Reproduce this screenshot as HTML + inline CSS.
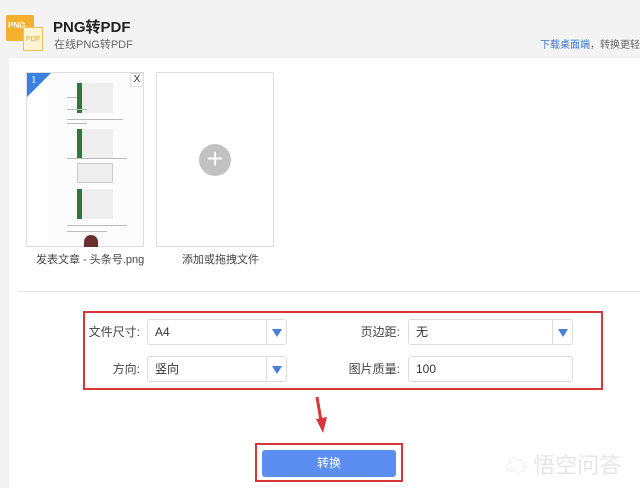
<!DOCTYPE html>
<html><head><meta charset="utf-8"><style>
*{margin:0;padding:0;box-sizing:border-box}
body{width:640px;height:488px;background:#f3f3f3;font-family:"Liberation Sans","Noto Sans CJK SC",sans-serif;position:relative;overflow:hidden;color:#333}
.a{position:absolute}
.main{left:9px;top:58px;width:631px;height:430px;background:#fff}
.card{border:1px solid #ddd;background:#fff;width:118px;height:175px;top:72px}
.sel{border:1px solid #ddd;border-radius:3px;height:26px;font-size:12px;line-height:24px;padding-left:7px;background:#fff}
.sel .ar{position:absolute;right:0;top:0;width:20px;height:24px;border-left:1px solid #ddd}
.sel .ar:after{content:"";position:absolute;left:5px;top:9px;border-left:5px solid transparent;border-right:5px solid transparent;border-top:8px solid #4a7fd8}
.lbl{font-size:12px;color:#444;text-align:right;width:80px}
.ln{position:absolute;height:1px;background:#bbb}
</style></head><body>
<div class="a" style="left:6px;top:15px;width:28px;height:26px;background:#f5b030;border-radius:2px"></div>
<div class="a" style="left:8px;top:21px;font-size:8px;color:#fff;font-weight:bold">PNG</div>
<div class="a" style="left:23px;top:27px;width:20px;height:24px;background:#fff4d6;border:1px solid #f0c060"></div>
<div class="a" style="left:26px;top:36px;font-size:7px;color:#e8a020">PDF</div>
<div class="a" style="left:53px;top:16px;font-size:15px;font-weight:bold;color:#222">PNG转PDF</div>
<div class="a" style="left:54px;top:36px;font-size:11px;color:#666">在线PNG转PDF</div>
<div class="a" style="left:540px;top:36px;font-size:10px;color:#666;white-space:nowrap"><span style="color:#3a78d0">下载桌面端</span>，转换更轻松</div>
<div class="a main"></div>
<div class="a card" style="left:26px">
 <div class="a" style="left:20px;top:0;width:96px;height:173px;background:#fcfcfc"></div>
 <div class="ln" style="left:40px;top:24px;width:14px"></div>
 <div class="a" style="left:50px;top:10px;width:36px;height:30px;background:#eee;border-left:5px solid #2a7a40"></div>
 <div class="ln" style="left:40px;top:36px;width:20px"></div>
 <div class="ln" style="left:40px;top:46px;width:56px"></div>
 <div class="ln" style="left:40px;top:50px;width:20px"></div>
 <div class="a" style="left:50px;top:56px;width:36px;height:30px;background:#eee;border-left:5px solid #2a7a40"></div>
 <div class="ln" style="left:40px;top:85px;width:60px"></div>
 <div class="a" style="left:50px;top:90px;width:36px;height:20px;background:#eee;border:1px solid #ccc"></div>
 <div class="a" style="left:50px;top:116px;width:36px;height:30px;background:#eee;border-left:5px solid #2a7a40"></div>
 <div class="ln" style="left:40px;top:152px;width:60px"></div>
 <div class="ln" style="left:40px;top:158px;width:40px"></div>
 <div class="a" style="left:57px;top:162px;width:14px;height:12px;background:#6a3030;border-radius:7px 7px 0 0"></div>
 <div class="a" style="left:0;top:0;width:0;height:0;border-top:24px solid #3a80e0;border-right:24px solid transparent"></div>
 <div class="a" style="left:4px;top:1px;color:#fff;font-size:11px;font-family:'Liberation Serif',serif">1</div>
 <div class="a" style="left:103px;top:0;width:14px;height:14px;border:1px solid #ddd;background:#fff;font-size:10px;text-align:center;line-height:12px">X</div>
</div>
<div class="a card" style="left:156px"><div class="a" style="left:42px;top:71px;width:32px;height:32px;border-radius:50%;background:#c2c2c2;color:#fff;font-size:28px;line-height:30px;text-align:center">+</div></div>
<div class="a" style="left:36px;top:251px;font-size:11px;color:#444">发表文章 - 头条号.png</div>
<div class="a" style="left:182px;top:251px;font-size:11px;color:#444">添加或拖拽文件</div>
<div class="a" style="left:18px;top:291px;width:622px;height:1px;background:#e4e4e4"></div>
<div class="a" style="left:83px;top:311px;width:520px;height:79px;border:2px solid #d9363a"></div>
<div class="a lbl" style="left:60px;top:323px">文件尺寸:</div>
<div class="a lbl" style="left:60px;top:360px">方向:</div>
<div class="a lbl" style="left:320px;top:323px">页边距:</div>
<div class="a lbl" style="left:320px;top:360px">图片质量:</div>
<div class="a sel" style="left:147px;top:319px;width:140px">A4<div class="ar"></div></div>
<div class="a sel" style="left:147px;top:356px;width:140px">竖向<div class="ar"></div></div>
<div class="a sel" style="left:408px;top:319px;width:165px">无<div class="ar"></div></div>
<div class="a sel" style="left:408px;top:356px;width:165px">100</div>
<svg class="a" style="left:310px;top:395px" width="20" height="42"><path d="M7 2 L11 26" stroke="#d9363a" stroke-width="3"/><path d="M6 24 L17 22 L13 38 Z" fill="#d9363a"/></svg>
<div class="a" style="left:255px;top:443px;width:148px;height:39px;border:2px solid #d9363a"></div>
<div class="a" style="left:262px;top:450px;width:134px;height:27px;background:#5b8ef0;border-radius:3px;color:#fff;font-size:12px;text-align:center;line-height:27px">转换</div>
<div class="a" style="left:505px;top:448px;font-size:22px;color:#e6e6e6;white-space:nowrap">☁ 悟空问答</div>
</body></html>
